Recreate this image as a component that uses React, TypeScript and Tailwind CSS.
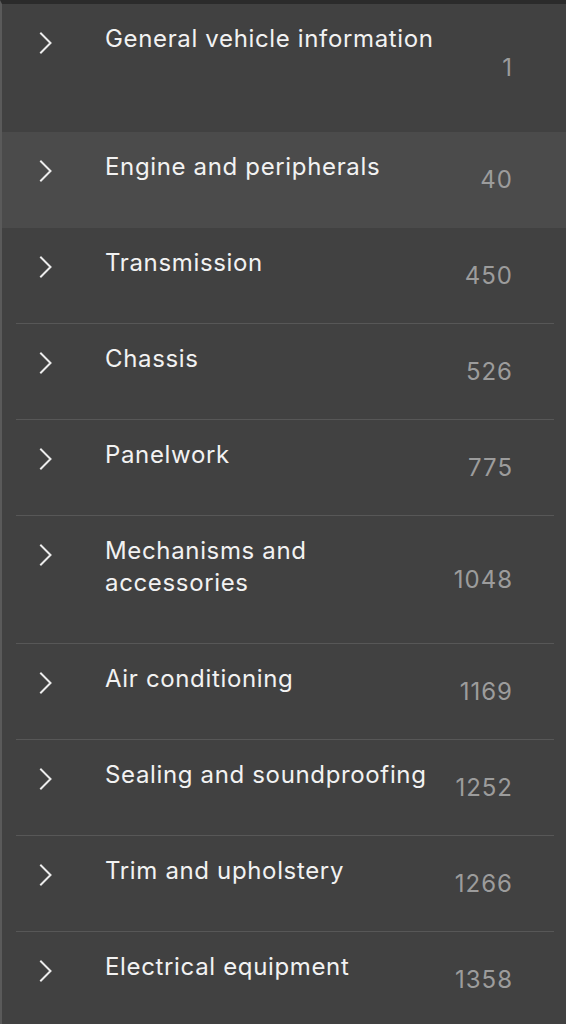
import React from "react";

const rows: { title: string; num: string; h: string; hover?: boolean; sep: boolean }[] = [
  { title: "General vehicle information", num: "1", h: "h-[128px]", sep: false },
  { title: "Engine and peripherals", num: "40", h: "h-[96px]", hover: true, sep: false },
  { title: "Transmission", num: "450", h: "h-[96px]", sep: true },
  { title: "Chassis", num: "526", h: "h-[96px]", sep: true },
  { title: "Panelwork", num: "775", h: "h-[96px]", sep: true },
  { title: "Mechanisms and accessories", num: "1048", h: "h-[128px]", sep: true },
  { title: "Air conditioning", num: "1169", h: "h-[96px]", sep: true },
  { title: "Sealing and soundproofing", num: "1252", h: "h-[96px]", sep: true },
  { title: "Trim and upholstery", num: "1266", h: "h-[96px]", sep: true },
  { title: "Electrical equipment", num: "1358", h: "h-[96px]", sep: false },
];

function Chevron() {
  return (
    <svg width="14" height="22" viewBox="0 0 14 22" fill="none">
      <path d="M2 1.5 L11.5 11 L2 20.5" stroke="#ececec" strokeWidth="2" strokeLinecap="square" />
    </svg>
  );
}

export default function App() {
  return (
    <div
      className="w-[566px] h-[1024px] overflow-hidden bg-[#414141] border-t-4 border-t-[#2b2b2b] border-l-2 border-l-[#5a5a5a]"
      style={{ fontFamily: 'Inter, "Liberation Sans", Arial, sans-serif' }}
    >
      {rows.map((r) => (
        <div key={r.title} className={`relative ${r.h} ${r.hover ? "bg-[#4b4b4b]" : ""}`}>
          <div className="flex h-full items-center">
            <div className="self-start pt-[28px] pl-[37px] w-[103px] shrink-0">
              <Chevron />
            </div>
            <div className="self-start pt-[19px] w-[336px] shrink-0 text-[24px] leading-[32px] tracking-[0.65px] text-[#f2f2f2]">
              {r.title}
            </div>
            <div className="w-[72px] text-right text-[24px] leading-[32px] tracking-[1px] text-[#9c9c9c] shrink-0">
              {r.num}
            </div>
          </div>
          {r.sep && <div className="absolute bottom-0 left-[14px] right-[12px] h-px bg-[#575757]" />}
        </div>
      ))}
    </div>
  );
}
